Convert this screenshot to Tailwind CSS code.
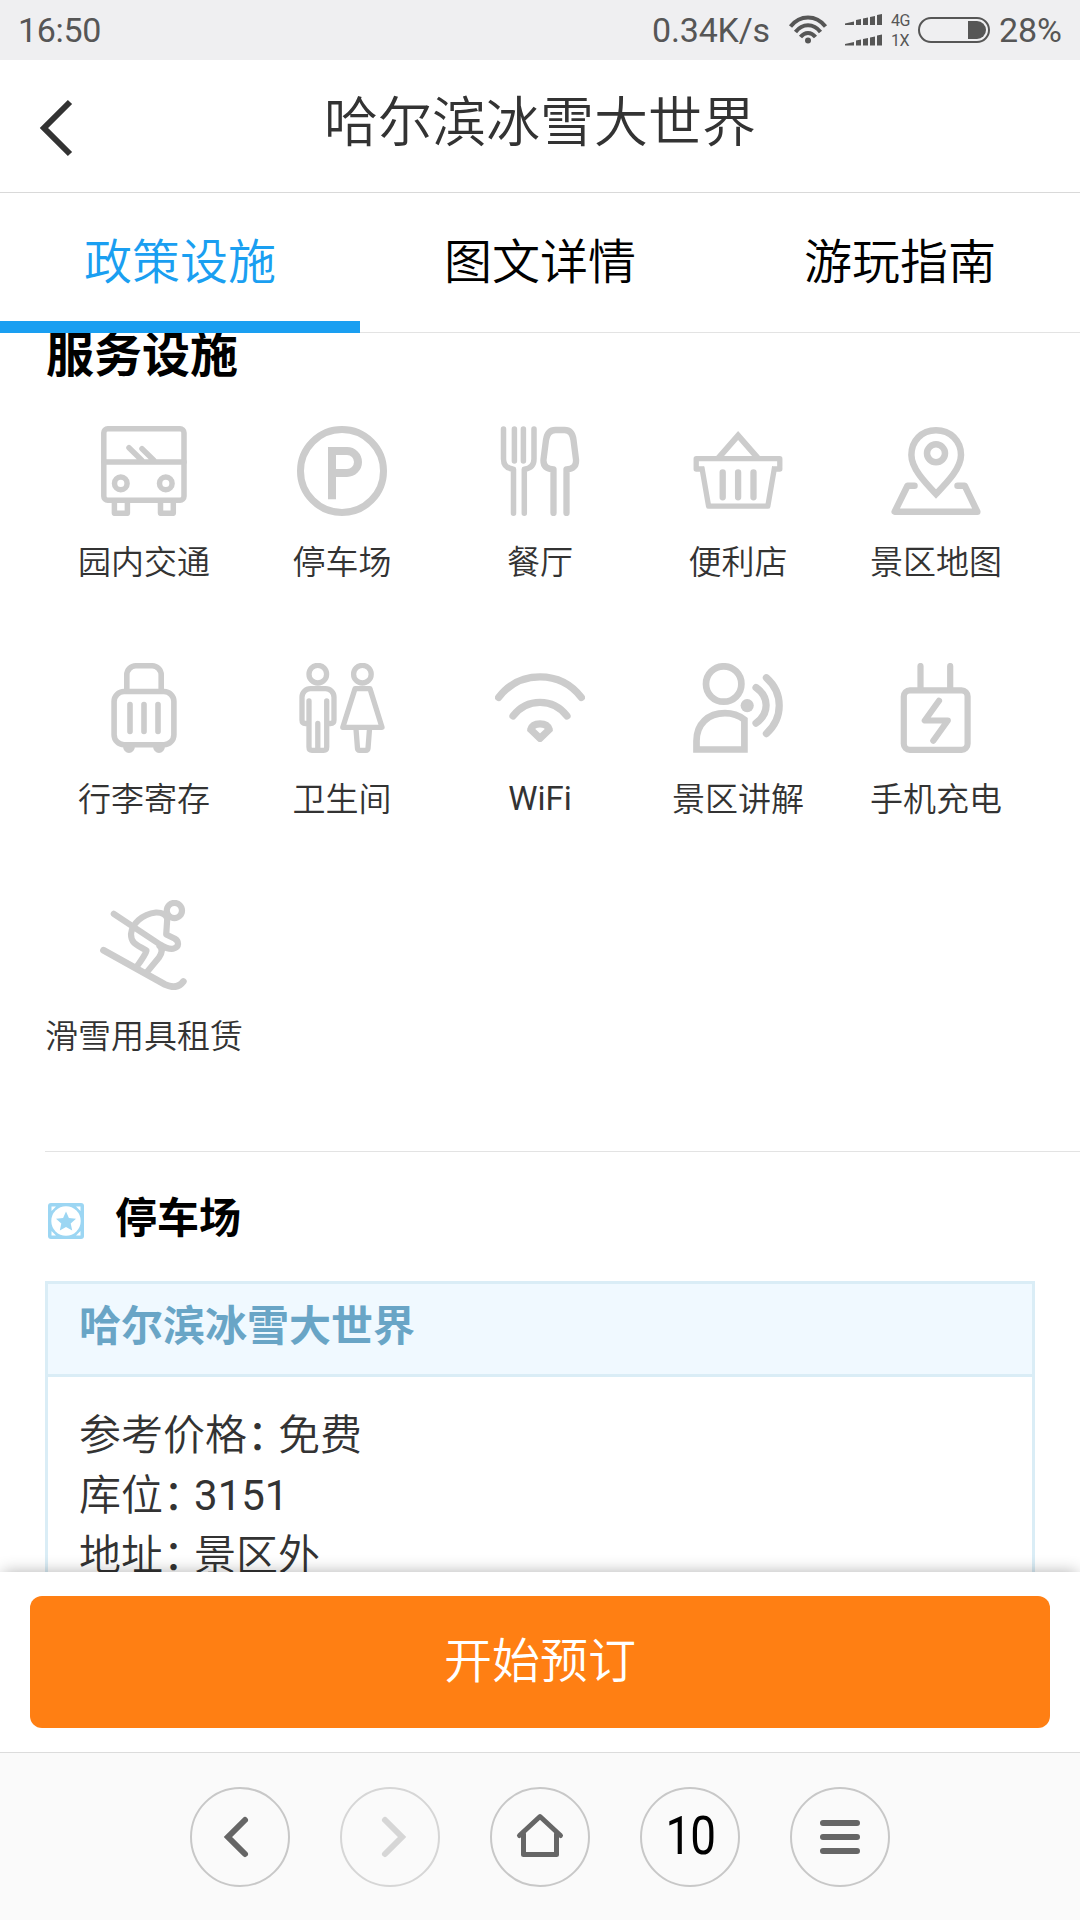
<!DOCTYPE html>
<html lang="zh-CN">
<head>
  <meta charset="UTF-8">
  <meta name="viewport" content="width=device-width, initial-scale=1.0">
  <title>哈尔滨冰雪大世界</title>
  <script src="https://cdn.jsdelivr.net/npm/@tailwindcss/browser@4"></script>
</head>
<body class="bg-white">
<div class="w-[1080px] h-[1920px] flex flex-col overflow-hidden bg-white font-['Roboto','Noto_Sans_CJK_SC',sans-serif] font-[350] text-[#333]">

  <!-- Status bar -->
  <div class="h-[60px] shrink-0 bg-[#efeff1] flex items-center justify-between px-[18px] text-[34px] leading-[60px] font-normal text-[#565656]">
    <span class="tracking-[-0.3px]">16:50</span>
    <div class="flex items-center">
      <span class="tracking-[-0.2px]">0.34K/s</span>
      <svg class="ml-[18px] w-[40px] h-[30px]" viewBox="0 0 40 30" fill="none" stroke="#565656" stroke-width="4">
        <path d="M2.5 11.5C12-.5 28-.5 37.500 11.500"/>
        <path d="M7.500 17C14.500 8 25.500 8 32.500 17"/>
        <path d="M12.500 22C17 16.500 23 16.500 27.500 22"/>
        <circle cx="20" cy="25.500" r="3" fill="#565656" stroke="none"/>
      </svg>
      <svg class="ml-[17px] w-[38px] h-[32px]" viewBox="0 0 38 32" fill="#565656">
        <path d="M0 9.500L9 7.500V11H0zM11 6L16 5V11H11zM18 4.500L23 3.500V11H18zM25 3L30 2V11H25zM32 1L37 0V11H32z"/>
        <path transform="translate(0 20.500)" d="M0 9.500L9 7.500V11H0zM11 6L16 5V11H11zM18 4.500L23 3.500V11H18zM25 3L30 2V11H25zM32 1L37 0V11H32z"/>
      </svg>
      <div class="ml-[8px] w-[27px] flex flex-col pt-px text-[16px] leading-[20px] tracking-[-0.3px]">
        <span>4G</span>
        <span>1X</span>
      </div>
      <div class="w-[72px] h-[26px] rounded-full border-2 border-[#565656] p-[2px] flex justify-end">
        <div class="w-[18px] h-[18px] bg-[#565656] rounded-r-full"></div>
      </div>
      <span class="ml-[9px]">28%</span>
    </div>
  </div>

  <!-- Title bar -->
  <header class="h-[133px] shrink-0 border-b border-[#d9d9d9] flex items-center relative">
    <svg class="ml-[36px] mt-[3px] w-[40px] h-[60px]" viewBox="0 0 40 60" fill="none" stroke="#333" stroke-width="6">
      <path d="M34 4L8 30L34 56"/>
    </svg>
    <h1 class="absolute inset-x-0 top-0 text-center text-[54px] leading-[128px]">哈尔滨冰雪大世界</h1>
  </header>

  <!-- Tabs -->
  <nav class="h-[140px] shrink-0 grid grid-cols-3 text-center text-[48px] leading-[122px] text-black">
    <a class="pt-[9px] pb-px h-[140px] border-b-12 border-[#1a9ff1] text-[#1a9ff1]">政策设施</a>
    <a class="pt-[9px] h-[140px] border-b border-[#e3e3e3]">图文详情</a>
    <a class="pt-[9px] h-[140px] border-b border-[#e3e3e3]">游玩指南</a>
  </nav>

  <!-- Content -->
  <main class="flex-1 min-h-0 overflow-hidden">
    <h2 class="pl-[46px] -mt-[13px] text-[48px] leading-[72px] font-bold text-black">服务设施</h2>

    <div class="mx-[45px] mt-[34px] grid grid-cols-5 auto-rows-[237px] justify-items-center text-[33px] leading-[48px] text-center whitespace-nowrap">
      <div class="flex flex-col items-center w-0">
        <svg class="shrink-0 w-[90px] h-[90px]" viewBox="0 0 90 90" fill="none" stroke="#ccc" stroke-width="5.5" stroke-linecap="round" stroke-linejoin="round">
          <rect x="4.800" y="2.800" width="80.200" height="71.400" rx="4"/>
          <path d="M5 36H85M30 21.700L43 34.500M43 22.700L55 34.500M15.400 76V87.300H28.400V76M61.500 76V87.300H74.300V76"/>
          <circle cx="21.800" cy="57.400" r="6.300"/>
          <circle cx="66.800" cy="57.400" r="6.300"/>
        </svg>
        <p class="mt-[23px]">园内交通</p>
      </div>
      <div class="flex flex-col items-center w-0">
        <svg class="shrink-0 w-[90px] h-[90px]" viewBox="0 0 90 90" fill="none" stroke="#ccc" stroke-width="7">
          <circle cx="45" cy="45" r="41.500"/>
          <path stroke-width="8" d="M35 73.300V25H50a11 11 0 0 1 0 22H35"/>
        </svg>
        <p class="mt-[23px]">停车场</p>
      </div>
      <div class="flex flex-col items-center w-0">
        <svg class="shrink-0 w-[90px] h-[90px]" viewBox="0 0 90 90" fill="none" stroke="#ccc" stroke-width="5.5" stroke-linecap="round" stroke-linejoin="round">
          <path d="M8.500 2.900V33C8.500 39 12 42.500 18.500 43.200V87.200M39 2.900V33C39 39 35.500 42.500 29.300 43.200V87.200M19.400 2.900V35M28.400 2.900V35"/>
          <path stroke-width="6.300" d="M58.500 87V43.500C52 43 48 40 48.500 33.500L51 14C52 7.500 55 4 60.500 4H69.500C75 4 77.700 7.500 78.500 14L81 33.500C81.500 40 78 43 71.500 43.500V87"/>
        </svg>
        <p class="mt-[23px]">餐厅</p>
      </div>
      <div class="flex flex-col items-center w-0">
        <svg class="shrink-0 w-[90px] h-[90px]" viewBox="0 0 90 90" fill="none" stroke="#ccc" stroke-width="5.300" stroke-linejoin="round">
          <path d="M11 43H3.200V32.700H86.800V43H79M8.800 41L15.600 80.200H74.800L81.600 41"/>
          <path stroke-linejoin="miter" stroke-width="5.800" d="M25 32.500L45.100 9.500L65.200 32.500"/>
          <path stroke-width="6.300" stroke-linecap="round" d="M29.700 46.300V71.300M45.100 46.300V71.300M60.500 46.300V71.300"/>
        </svg>
        <p class="mt-[23px]">便利店</p>
      </div>
      <div class="flex flex-col items-center w-0">
        <svg class="shrink-0 w-[90px] h-[90px]" viewBox="0 0 90 90" fill="none" stroke="#ccc" stroke-width="6.500" stroke-linecap="round" stroke-linejoin="round">
          <path stroke-linejoin="miter" d="M45 4.300C30.500 4.300 20.400 15 20.400 29C20.400 42 33 55.500 45 68C57 55.500 70 42 70 29C70 15 59.500 4.300 45 4.300Z"/>
          <circle cx="45" cy="27.300" r="9"/>
          <path d="M23.500 59.700H16.500L3.700 85.700H86.300L73.700 59.700H66.500"/>
        </svg>
        <p class="mt-[23px]">景区地图</p>
      </div>

      <div class="flex flex-col items-center w-0">
        <svg class="shrink-0 w-[90px] h-[90px]" viewBox="0 0 90 90" fill="none" stroke="#ccc" stroke-width="5.600" stroke-linecap="round">
          <rect x="15.100" y="28.500" width="59.800" height="53.200" rx="10"/>
          <path d="M27.800 27V12A9 9.200 0 0 1 36.800 2.800H53.200A9 9.200 0 0 1 62.200 12V27M31 41.500V68.500M45 41.500V68.500M59 41.500V68.500"/>
          <path fill="#ccc" stroke="none" d="M24 83H36A6 7 0 0 1 24 83ZM54 83H66A6 7 0 0 1 54 83Z"/>
        </svg>
        <p class="mt-[23px]">行李寄存</p>
      </div>
      <div class="flex flex-col items-center w-0">
        <svg class="shrink-0 w-[90px] h-[90px]" viewBox="0 0 90 90" fill="none" stroke="#ccc" stroke-width="5.300" stroke-linecap="round" stroke-linejoin="round">
          <circle cx="20.800" cy="11.200" r="8.800"/>
          <path d="M12 60.500H8.500Q5 60.500 5 57V34.200A8.500 8.500 0 0 1 13.500 25.700H28.500A8.500 8.500 0 0 1 37 34.200V57Q37 60.500 33.500 60.500H29.700M12 38V84Q12 87.300 15 87.300H26.700Q29.700 87.300 29.700 84V38M20.800 60.500V87"/>
          <circle cx="65.400" cy="11.200" r="8.800"/>
          <path d="M58 25.700H73L85 64.300H45.800ZM59 66L60.500 85.500Q60.700 87.300 62.500 87.300H69Q70.800 87.300 71 85.500L72.500 66"/>
        </svg>
        <p class="mt-[23px]">卫生间</p>
      </div>
      <div class="flex flex-col items-center w-0">
        <svg class="shrink-0 w-[90px] h-[90px]" viewBox="0 0 90 90" fill="none" stroke="#ccc" stroke-width="7.200" stroke-linecap="round" stroke-linejoin="round">
          <path d="M3.600 34.500C14 21 28 13.900 45 13.900S76 21 86.400 34.500M18 53C25 44 34 39.400 45 39.400S65 44 72 53"/>
          <path d="M35.700 66.500C37 62.500 40.500 60.800 45 60.800S53 62.500 54.300 66.500L45 75.300Z"/>
        </svg>
        <p class="mt-[22px] font-normal">WiFi</p>
      </div>
      <div class="flex flex-col items-center w-0">
        <svg class="shrink-0 w-[90px] h-[90px]" viewBox="0 0 90 90" fill="none" stroke="#ccc" stroke-width="6.700" stroke-linecap="round">
          <circle cx="30.700" cy="21" r="17.700"/>
          <path d="M3.500 86.500V78C3.500 61 15 50.200 32 50.200C40 50.200 46 52.500 51.400 56.700V86.500Z"/>
          <circle cx="54.200" cy="42.600" r="6.600" fill="#ccc" stroke="none"/>
          <path stroke-width="7.200" d="M63 24.500C76.500 34 76.500 50.500 63 60.200M73.400 14.700C90.500 30 90.500 55 73.400 70.600"/>
        </svg>
        <p class="mt-[23px]">景区讲解</p>
      </div>
      <div class="flex flex-col items-center w-0">
        <svg class="shrink-0 w-[90px] h-[90px]" viewBox="0 0 90 90" fill="none" stroke="#ccc" stroke-width="6.200" stroke-linecap="round" stroke-linejoin="round">
          <rect x="12.800" y="27.400" width="63.800" height="59.400" rx="6"/>
          <path d="M29.500 3V25M59.200 3V25M48 37.800L33.800 57.500H56.800L42.300 77.700"/>
        </svg>
        <p class="mt-[23px]">手机充电</p>
      </div>

      <div class="flex flex-col items-center w-0">
        <svg class="shrink-0 w-[90px] h-[90px]" viewBox="0 0 90 90" fill="none" stroke="#ccc" stroke-width="6.200" stroke-linecap="round" stroke-linejoin="round">
          <circle cx="75.400" cy="10.500" r="7.600"/>
          <path d="M14.800 13.800L61 44.500Q69 49.500 74 48.800C81 47 80 41 75.500 38.500L67.200 34.500L68.200 19.500C68 14 62 12.300 57 12.500C43 14 33 24 32 34C32 42 35 44 47.500 50.500Q47 54 37.500 67M60.500 46Q65 50 60 57.500L48 72"/>
          <path stroke-width="6.800" d="M4.500 50.300L66 84.500Q78 90 84.300 81.500"/>
        </svg>
        <p class="mt-[23px]">滑雪用具租赁</p>
      </div>
    </div>

    <div class="ml-[45px] mt-[14px] border-t border-[#e3e3e3]">
      <div class="flex items-center pl-[3px] pt-[35px]">
        <svg class="mt-[4px] w-[36px] h-[36px]" viewBox="0 0 36 36" fill="#9cd6f3">
          <rect width="36" height="36" rx="3"/>
          <circle cx="18" cy="18" r="14.700" fill="#fff"/>
          <path fill="#fff" d="M3.500 3.500H8L3.500 8ZM32.500 3.500V8L28 3.500ZM3.500 32.500V28L8 32.500ZM32.500 32.500H28L32.500 28Z"/>
          <path d="M18 8.500L20.900 15L28 15.700L22.700 20.400L24.200 27.500L18 23.900L11.800 27.500L13.300 20.400L8 15.700L15.100 15Z"/>
        </svg>
        <h3 class="ml-[31px] text-[42px] leading-[64px] font-bold text-black">停车场</h3>
      </div>
      <div class="mt-[30px] mr-[45px] h-[400px] border-3 border-[#daedf6]">
        <h4 class="h-[93px] border-b-3 border-[#daedf6] bg-[#f0f9ff] pl-[31px] text-[42px] leading-[86px] font-bold text-[#69a5c6]">哈尔滨冰雪大世界</h4>
        <div class="pl-[31px] pt-[29px] text-[42px] leading-[60px]">
          <p>参考价格<span class="font-normal tracking-[-11px]">：</span>免费</p>
          <p>库位<span class="font-normal tracking-[-11px]">：</span><span class="font-normal">3151</span></p>
          <p>地址<span class="font-normal tracking-[-11px]">：</span>景区外</p>
        </div>
      </div>
    </div>
  </main>

  <!-- Booking button -->
  <div class="relative h-[180px] shrink-0 bg-white px-[30px] pt-[24px] shadow-[0_-3px_15px_-3px_rgba(0,0,0,0.3)]">
    <button class="block w-full h-[132px] rounded-xl bg-[#ff7f13] text-white text-[48px] leading-[132px]">开始预订</button>
  </div>

  <!-- Browser toolbar -->
  <div class="relative h-[168px] shrink-0 border-t border-[#dcdcdc] bg-[#fafafa] flex justify-center gap-[50px] pt-[34px]">
    <div class="w-[100px] h-[100px] rounded-full border-2 border-[#c8c8c8]">
      <svg class="w-[96px] h-[96px]" viewBox="0 0 96 96" fill="none" stroke="#666" stroke-width="6" stroke-linecap="round"><path d="M53 31L36 48L53 65"/></svg>
    </div>
    <div class="w-[100px] h-[100px] rounded-full border-2 border-[#d6d6d6]">
      <svg class="w-[96px] h-[96px]" viewBox="0 0 96 96" fill="none" stroke="#d6d6d6" stroke-width="6" stroke-linecap="round"><path d="M43 31L60 48L43 65"/></svg>
    </div>
    <div class="w-[100px] h-[100px] rounded-full border-2 border-[#c8c8c8]">
      <svg class="w-[96px] h-[96px]" viewBox="0 0 96 96" fill="none" stroke="#666" stroke-width="5" stroke-linecap="round" stroke-linejoin="round"><path d="M27.500 46.500L48 27.500L68.500 46.500M31.500 45V65.500H64.500V45"/></svg>
    </div>
    <div class="w-[100px] h-[100px] rounded-full border-2 border-[#c8c8c8] flex justify-center text-[54px] leading-[94px] tracking-[-1px] font-normal text-black">
      <span class="scale-x-[0.85]">10</span>
    </div>
    <div class="w-[100px] h-[100px] rounded-full border-2 border-[#c8c8c8]">
      <svg class="w-[96px] h-[96px]" viewBox="0 0 96 96" fill="none" stroke="#666" stroke-width="6" stroke-linecap="round"><path d="M31 34H65M31 48H65M31 62H65"/></svg>
    </div>
  </div>
</div>
</body>
</html>
